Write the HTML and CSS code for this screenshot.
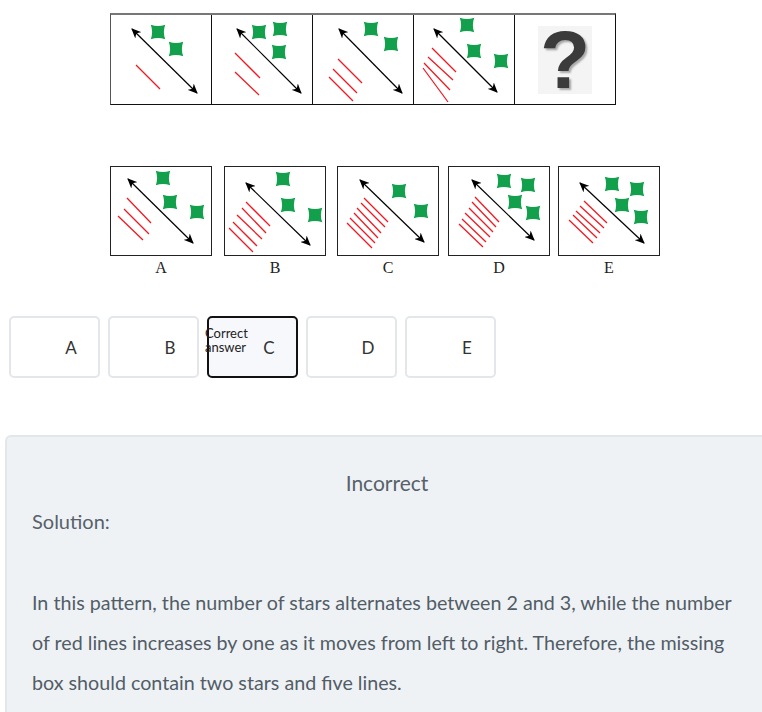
FILE: index.html
```
<!DOCTYPE html>
<html>
<head>
<meta charset="utf-8">
<link rel="stylesheet" href="styles.css">
</head>
<body>
<svg class="defs" width="0" height="0">
  <defs>
    <marker id="ah" markerUnits="userSpaceOnUse" markerWidth="11" markerHeight="9" refX="9" refY="4.5" orient="auto-start-reverse">
      <path d="M0,0 L10,4.5 L0,9 L3,4.5 Z" fill="#000"/>
    </marker>
    <path id="st" d="M-7.2,-7.2 Q0,-4.6 7.2,-7.2 Q4.6,0 7.2,7.2 Q0,4.6 -7.2,7.2 Q-4.6,0 -7.2,-7.2 Z" fill="#13a04c"/>
  </defs>
</svg>

<div class="strip">
  <div class="cell">
    <svg viewBox="0 0 100 89" class="fig">
      <line x1="21" y1="14" x2="86" y2="78" class="arr"/>
      <use href="#st" x="47" y="17"/><use href="#st" x="65" y="34"/>
      <g class="red"><line x1="25" y1="50" x2="49" y2="74"/></g>
    </svg>
  </div>
  <div class="cell">
    <svg viewBox="0 0 100 89" class="fig">
      <line x1="25" y1="14" x2="89" y2="78" class="arr"/>
      <use href="#st" x="47" y="17"/><use href="#st" x="68" y="14"/><use href="#st" x="67" y="37"/>
      <g class="red"><line x1="23" y1="38" x2="48" y2="63"/><line x1="23" y1="57" x2="47" y2="80"/></g>
    </svg>
  </div>
  <div class="cell">
    <svg viewBox="0 0 100 89" class="fig">
      <line x1="26" y1="14" x2="89" y2="78" class="arr"/>
      <use href="#st" x="58" y="14"/><use href="#st" x="78" y="29"/>
      <g class="red"><line x1="25" y1="44" x2="49" y2="68"/><line x1="20" y1="54" x2="44" y2="78"/><line x1="16" y1="62" x2="40" y2="86"/></g>
    </svg>
  </div>
  <div class="cell">
    <svg viewBox="0 0 100 89" class="fig">
      <line x1="20" y1="14" x2="83" y2="77" class="arr"/>
      <use href="#st" x="53" y="10"/><use href="#st" x="60" y="36"/><use href="#st" x="87" y="46"/>
      <g class="red"><line x1="18" y1="33" x2="42" y2="57"/><line x1="14" y1="42" x2="39" y2="65"/><line x1="10" y1="48" x2="36" y2="75"/><line x1="9" y1="53" x2="34" y2="87"/></g>
    </svg>
  </div>
  <div class="cell qcell">
    <div class="qbg"><span class="qmark">?</span></div>
  </div>
</div>

<div class="opts">
  <div class="opt">
    <div class="obox">
      <svg viewBox="0 0 100 88" class="fig">
        <line x1="17" y1="12" x2="82" y2="76" class="arr"/>
        <use href="#st" x="52" y="11"/><use href="#st" x="59" y="35"/><use href="#st" x="86" y="45"/>
        <g class="red"><line x1="16" y1="31" x2="40" y2="56"/><line x1="13" y1="42" x2="38" y2="67"/><line x1="7" y1="49" x2="32" y2="73"/></g>
      </svg>
    </div>
    <div class="olabel">A</div>
  </div>
  <div class="opt">
    <div class="obox">
      <svg viewBox="0 0 100 88" class="fig">
        <line x1="21" y1="16" x2="85" y2="78" class="arr"/>
        <use href="#st" x="58" y="12"/><use href="#st" x="63" y="38"/><use href="#st" x="90" y="48"/>
        <g class="red"><line x1="21" y1="35" x2="45" y2="59"/><line x1="17" y1="41" x2="41" y2="66"/><line x1="12" y1="48" x2="37" y2="72"/><line x1="8" y1="55" x2="32" y2="79"/><line x1="4" y1="61" x2="28" y2="85"/></g>
      </svg>
    </div>
    <div class="olabel">B</div>
  </div>
  <div class="opt">
    <div class="obox">
      <svg viewBox="0 0 100 88" class="fig">
        <line x1="22" y1="13" x2="86" y2="75" class="arr"/>
        <use href="#st" x="61" y="24"/><use href="#st" x="83" y="44"/>
        <g class="red"><line x1="26" y1="31" x2="50" y2="55"/><line x1="23" y1="36" x2="47" y2="60"/><line x1="19" y1="41" x2="43" y2="66"/><line x1="16" y1="46" x2="40" y2="71"/><line x1="12" y1="51" x2="37" y2="76"/><line x1="9" y1="56" x2="34" y2="81"/></g>
      </svg>
    </div>
    <div class="olabel">C</div>
  </div>
  <div class="opt">
    <div class="obox">
      <svg viewBox="0 0 100 88" class="fig">
        <line x1="23" y1="13" x2="85" y2="73" class="arr"/>
        <use href="#st" x="55" y="14"/><use href="#st" x="79" y="18"/><use href="#st" x="66" y="35"/><use href="#st" x="84" y="46"/>
        <g class="red"><line x1="26" y1="30" x2="50" y2="55"/><line x1="23" y1="35" x2="47" y2="60"/><line x1="20" y1="41" x2="44" y2="65"/><line x1="16" y1="46" x2="41" y2="70"/><line x1="13" y1="52" x2="37" y2="75"/><line x1="10" y1="57" x2="34" y2="80"/></g>
      </svg>
    </div>
    <div class="olabel">D</div>
  </div>
  <div class="opt">
    <div class="obox">
      <svg viewBox="0 0 100 88" class="fig">
        <line x1="21" y1="16" x2="85" y2="76" class="arr"/>
        <use href="#st" x="53" y="17"/><use href="#st" x="78" y="22"/><use href="#st" x="63" y="38"/><use href="#st" x="82" y="50"/>
        <g class="red"><line x1="25" y1="34" x2="48" y2="56"/><line x1="21" y1="39" x2="45" y2="61"/><line x1="17" y1="44" x2="41" y2="66"/><line x1="14" y1="48" x2="38" y2="71"/><line x1="10" y1="53" x2="34" y2="76"/></g>
      </svg>
    </div>
    <div class="olabel">E</div>
  </div>
</div>

<div class="btns">
  <div class="btn"><span class="letter">A</span></div>
  <div class="btn"><span class="letter">B</span></div>
  <div class="btn sel"><span class="tag">Correct<br>answer</span><span class="letter">C</span></div>
  <div class="btn"><span class="letter">D</span></div>
  <div class="btn"><span class="letter">E</span></div>
</div>

<div class="panel">
  <div class="status">Incorrect</div>
  <div class="soltitle">Solution:</div>
  <p class="soltext">In this pattern, the number of stars alternates between 2 and 3, while the number of red lines increases by one as it moves from left to right. Therefore, the missing box should contain two stars and five lines.</p>
</div>
</body>
</html>
```
FILE: styles.css
```
html, body {
  margin: 0;
  padding: 0;
  background: #fff;
  overflow: hidden;
}
body {
  font-family: Lato, "Noto Sans", sans-serif;
  color: #333;
}
.defs {
  display: block;
  width: 0;
  height: 0;
}
.fig {
  display: block;
  width: 100%;
  height: 100%;
}
.arr {
  stroke: #000;
  stroke-width: 1.2;
  marker-start: url(#ah);
  marker-end: url(#ah);
}
.red line {
  stroke: #f2161e;
  stroke-width: 1.25;
}

.strip {
  display: flex;
  width: fit-content;
  margin: 13px 0 0 110px;
  border: 1px solid #111;
  border-top: 2px solid #777;
  border-left-color: #555;
}
.cell {
  width: 100px;
  height: 89px;
  border-left: 1px solid #111;
}
.cell:first-child {
  border-left: none;
}
.qcell {
  display: flex;
  align-items: center;
  justify-content: center;
}
.qbg {
  width: 54px;
  height: 68px;
  background: #f4f4f4;
  display: flex;
  align-items: center;
  justify-content: center;
}
.qmark {
  font-family: "Liberation Sans", Arial, sans-serif;
  font-weight: bold;
  font-size: 82px;
  line-height: 68px;
  color: #3b3b3b;
  text-shadow: 2px 2px 2px #a8a8a8;
}

.opts {
  display: flex;
  margin: 61px 0 0 110px;
}
.opt:nth-child(2) { margin-left: 12px; }
.opt:nth-child(3) { margin-left: 11px; }
.opt:nth-child(4) { margin-left: 9px; }
.opt:nth-child(5) { margin-left: 8px; }
.obox {
  width: 100px;
  height: 88px;
  border: 1px solid #222;
}
.olabel {
  font-family: "Liberation Serif", "Times New Roman", serif;
  font-size: 16px;
  line-height: 16px;
  margin-top: 4px;
  text-align: center;
  color: #222;
}

.btns {
  display: flex;
  gap: 8px;
  margin: 40px 0 0 9px;
}
.btn {
  position: relative;
  box-sizing: border-box;
  width: 91px;
  height: 62px;
  border: 2px solid #e3e7ec;
  border-radius: 5px;
  background: #fff;
  display: flex;
  align-items: center;
  justify-content: center;
  padding-left: 33px;
}
.btn.sel {
  border-color: #111;
  background: #f6f8fc;
}
.letter {
  font-size: 17px;
  color: #333;
}
.tag {
  position: absolute;
  left: -4px;
  top: 9px;
  font-size: 13px;
  line-height: 13.5px;
  color: #222;
}

.panel {
  box-sizing: border-box;
  margin: 57px 0 0 5px;
  width: calc(100% - 5px + 8px);
  background: #eff2f5;
  border: 2px solid #e3e7eb;
  border-radius: 6px;
  padding: 34px 20px 20px 25px;
  min-height: 300px;
}
.status {
  text-align: center;
  font-size: 21px;
  line-height: 24px;
  color: #56616b;
  padding-right: 6px;
}
.soltitle {
  margin-top: 14px;
  font-size: 20px;
  line-height: 24px;
  color: #56616b;
}
.soltext {
  margin: 50px 0 0 0;
  font-size: 19.7px;
  line-height: 40px;
  color: #525d67;
}
```
